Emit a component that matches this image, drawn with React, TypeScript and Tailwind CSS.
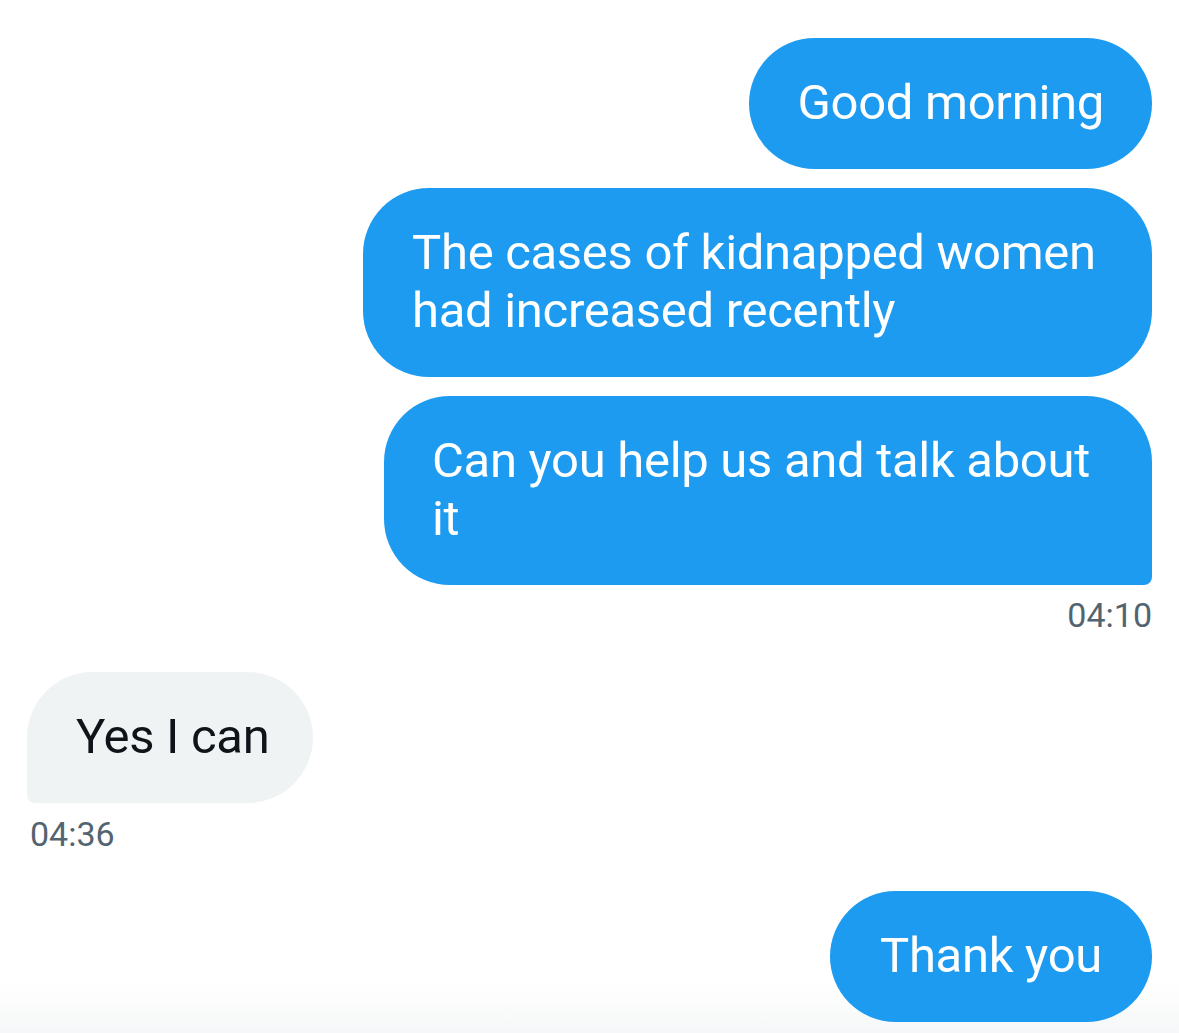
export default function App() {
  return (
    <main className="relative min-h-[1033px] overflow-hidden bg-white px-[27px] pt-[38px] font-['Roboto',sans-serif]">
      <div className="pointer-events-none absolute inset-x-0 bottom-0 h-[50px] bg-gradient-to-b from-transparent to-[#f6f7f8]" />
      <div className="relative flex flex-col text-[49px] leading-[58px] tracking-[-0.3px]">
        <div className="flex flex-col items-end gap-[19px]">
          <div className="rounded-[66px] bg-[#1d9bf0] px-[48px] pt-[36px] pb-[37px] text-white">
            Good morning
          </div>
          <div className="w-[789px] whitespace-nowrap rounded-[66px] bg-[#1d9bf0] pl-[49px] pt-[36px] pb-[37px] text-white">
            The cases of kidnapped women
            <br />
            had increased recently
          </div>
          <div className="w-[768px] whitespace-nowrap rounded-[66px] rounded-br-[8px] bg-[#1d9bf0] pl-[48px] pt-[36px] pb-[37px] text-white">
            Can you help us and talk about
            <br />
            it
          </div>
        </div>
        <div className="mt-[10px] text-right text-[34px] leading-[40px] tracking-normal text-[#536471]">04:10</div>

        <div className="mt-[37px] flex flex-col items-start">
          <div className="rounded-[66px] rounded-bl-[8px] bg-[#eff3f4] pl-[49px] pr-[44px] pt-[36px] pb-[37px] text-[#0f1419]">
            Yes I can
          </div>
          <div className="mt-[11px] pl-[3px] text-[34px] leading-[40px] tracking-normal text-[#536471]">04:36</div>
        </div>

        <div className="mt-[37px] flex flex-col items-end">
          <div className="rounded-[66px] bg-[#1d9bf0] px-[50px] pt-[36px] pb-[37px] text-white">
            Thank you
          </div>
        </div>
      </div>
    </main>
  )
}
